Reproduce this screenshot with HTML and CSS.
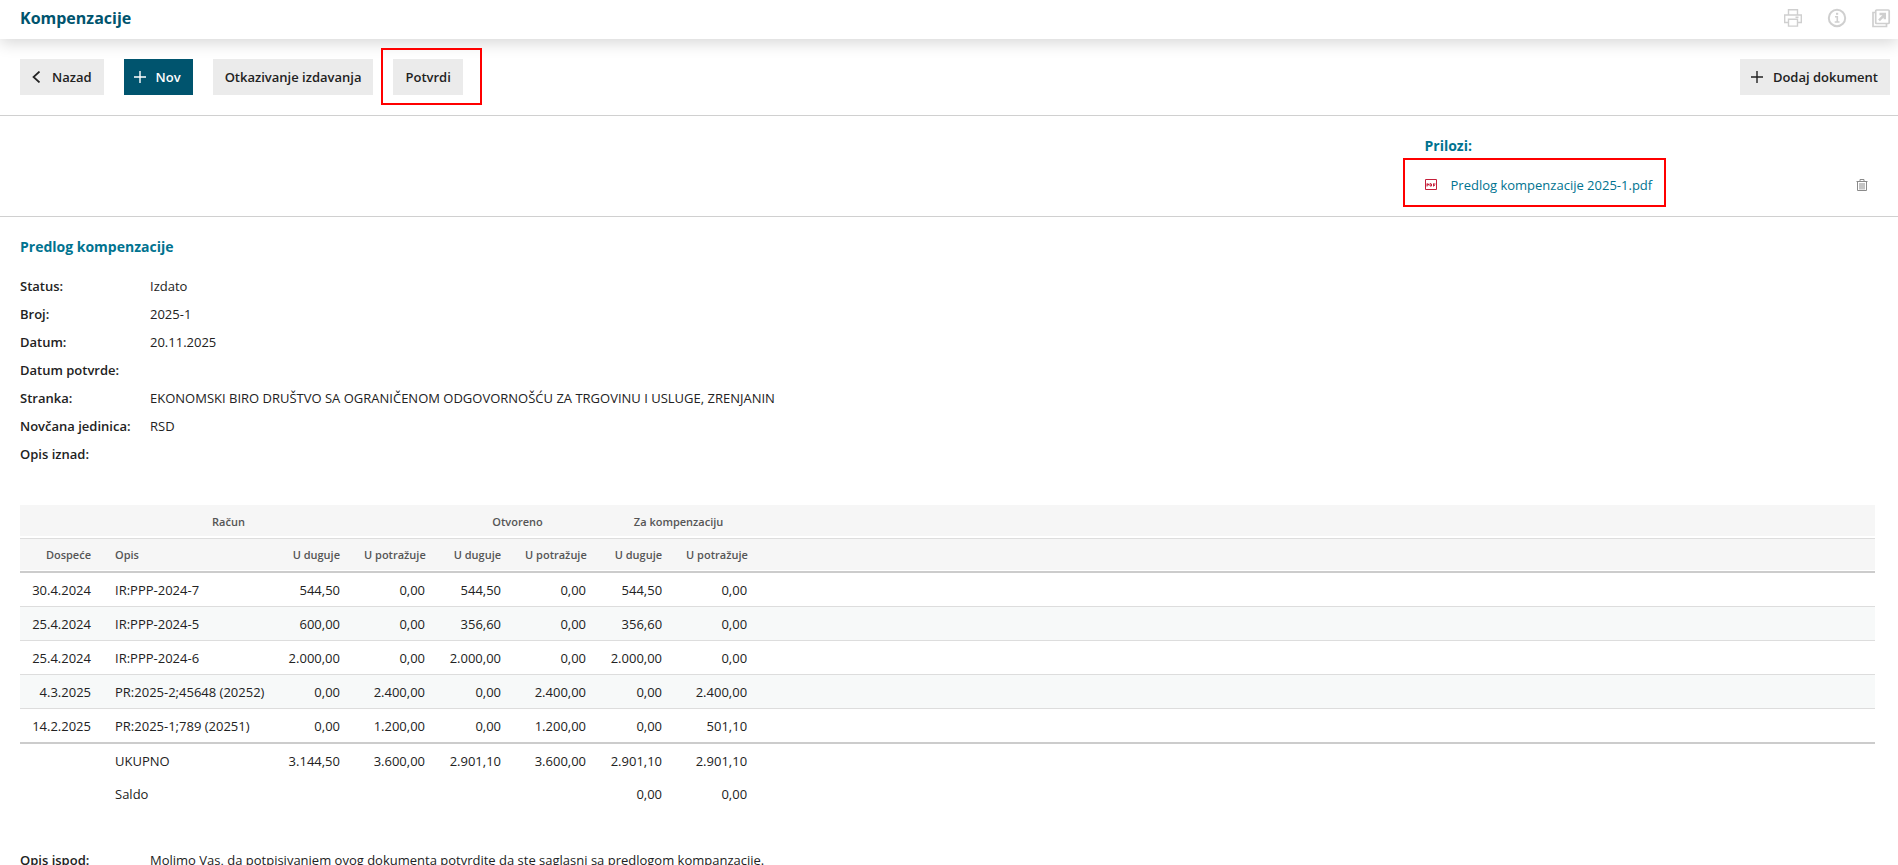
FILE: index.html
```html
<!DOCTYPE html>
<html lang="sr-Latn">
	<head>
		<meta charset="utf-8"/>
		<meta name="viewport" content="width=device-width"/>
		<title>Kompenzacije</title>
		<link rel="stylesheet" href="styles.css">
	</head>
	<body>
		<header class="header">
			<h1>Kompenzacije</h1>
			<div class="tools">
				<button type="button" class="tool" aria-label="Štampaj">
					<svg width="20" height="20" viewBox="0 0 20 20" fill="none" stroke="#cfcfcf" stroke-width="1.4"><path d="M5.5 7V1.7h9V7M5.5 14.5H1.7V7h16.6v7.5h-3.8M5.5 11.3h9v6.8h-9zM12.5 9.3h3"/></svg>
				</button>
				<button type="button" class="tool" aria-label="Informacije">
					<svg width="20" height="20" viewBox="0 0 20 20" fill="none" stroke="#cfcfcf"><circle cx="10" cy="10" r="8.2" stroke-width="2"/><path d="M8 8.7h2.3V14M7.7 14h4.8" stroke-width="1.6"/><path d="M9 5.8h2.2" stroke-width="2"/></svg>
				</button>
				<button type="button" class="tool" aria-label="Otvori u novom prozoru">
					<svg width="20" height="20" viewBox="0 0 20 20" fill="none" stroke="#cfcfcf" stroke-width="1.7"><rect x="4.7" y="2" width="13.5" height="13.5" rx="1"/><path d="M4.5 4.5H2v14h13.5v-3"/><path d="M8 12.3l5-5M8.5 6h5.3v5.3" stroke-width="2.4"/></svg>
				</button>
			</div>
		</header>

		<div class="toolbar">
			<button type="button" class="btn back">
				<svg width="12" height="12" viewBox="0 0 12 12" fill="none" stroke="#222" stroke-width="1.7"><path d="M7.5 0.5L1.5 6l6 5.5"/></svg>
				Nazad
			</button>
			<button type="button" class="btn primary">
				<svg width="12" height="12" viewBox="0 0 12 12" fill="none" stroke="#fff" stroke-width="1.4"><path d="M6 0v12M0 6h12"/></svg>
				Nov
			</button>
			<button type="button" class="btn">Otkazivanje izdavanja</button>
			<div class="marked">
				<button type="button" class="btn">Potvrdi</button>
			</div>
			<button type="button" class="btn add">
				<svg width="12" height="12" viewBox="0 0 12 12" fill="none" stroke="#222" stroke-width="1.4"><path d="M6 0v12M0 6h12"/></svg>
				Dodaj dokument
			</button>
		</div>

		<section class="files">
			<div class="files-list">
				<h2>Prilozi:</h2>
				<div class="file">
					<a href="#" class="marked">
						<svg width="12" height="12" viewBox="0 0 12 12"><path d="M0.5 0.5h11v10h-11z" fill="#fff" stroke="#c41f3a"/><path d="M2 7.5v-3M2 5h1.5v1H2M5 4.5v2.5h1.5v-2zM8.5 7.5v-3M8.5 5h2M8.5 6.3h1.5" fill="none" stroke="#c41f3a"/></svg>
						Predlog kompenzacije 2025-1.pdf
					</a>
					<button type="button" class="trash" aria-label="Obriši">
						<svg width="12" height="14" viewBox="0 0 12 14" fill="none" stroke="#8a8a8a"><path d="M0.5 3.5h11M4 3V1.5h4V3M1.5 4v8.5h9V4"/><path d="M4 5v6.5M6 5v6.5M8 5v6.5"/></svg>
					</button>
				</div>
			</div>
		</section>

		<main>
			<h2>Predlog kompenzacije</h2>
			<dl class="info">
				<dt>Status:</dt><dd>Izdato</dd>
				<dt>Broj:</dt><dd>2025-1</dd>
				<dt>Datum:</dt><dd>20.11.2025</dd>
				<dt>Datum potvrde:</dt><dd></dd>
				<dt>Stranka:</dt><dd>EKONOMSKI BIRO DRUŠTVO SA OGRANIČENOM ODGOVORNOŠĆU ZA TRGOVINU I USLUGE, ZRENJANIN</dd>
				<dt>Novčana jedinica:</dt><dd>RSD</dd>
				<dt>Opis iznad:</dt><dd></dd>
			</dl>

			<table>
				<colgroup>
					<col class="c-date"><col class="c-desc">
					<col class="c-debit"><col class="c-credit">
					<col class="c-debit"><col class="c-credit">
					<col class="c-debit"><col class="c-credit">
					<col>
				</colgroup>
				<thead>
					<tr class="groups">
						<th colspan="4">Račun</th>
						<th colspan="2">Otvoreno</th>
						<th colspan="2">Za kompenzaciju</th>
						<th></th>
					</tr>
					<tr class="names">
						<th>Dospeće</th><th class="desc">Opis</th>
						<th>U duguje</th><th>U potražuje</th>
						<th>U duguje</th><th>U potražuje</th>
						<th>U duguje</th><th>U potražuje</th>
						<th></th>
					</tr>
				</thead>
				<tbody>
					<tr><td>30.4.2024</td><td class="desc">IR:PPP-2024-7</td><td>544,50</td><td>0,00</td><td>544,50</td><td>0,00</td><td>544,50</td><td>0,00</td><td></td></tr>
					<tr><td>25.4.2024</td><td class="desc">IR:PPP-2024-5</td><td>600,00</td><td>0,00</td><td>356,60</td><td>0,00</td><td>356,60</td><td>0,00</td><td></td></tr>
					<tr><td>25.4.2024</td><td class="desc">IR:PPP-2024-6</td><td>2.000,00</td><td>0,00</td><td>2.000,00</td><td>0,00</td><td>2.000,00</td><td>0,00</td><td></td></tr>
					<tr><td>4.3.2025</td><td class="desc">PR:2025-2;45648 (20252)</td><td>0,00</td><td>2.400,00</td><td>0,00</td><td>2.400,00</td><td>0,00</td><td>2.400,00</td><td></td></tr>
					<tr><td>14.2.2025</td><td class="desc">PR:2025-1;789 (20251)</td><td>0,00</td><td>1.200,00</td><td>0,00</td><td>1.200,00</td><td>0,00</td><td>501,10</td><td></td></tr>
				</tbody>
				<tfoot>
					<tr><td></td><td class="desc">UKUPNO</td><td>3.144,50</td><td>3.600,00</td><td>2.901,10</td><td>3.600,00</td><td>2.901,10</td><td>2.901,10</td><td></td></tr>
					<tr><td></td><td class="desc">Saldo</td><td></td><td></td><td></td><td></td><td>0,00</td><td>0,00</td><td></td></tr>
				</tfoot>
			</table>

			<dl class="info">
				<dt>Opis ispod:</dt><dd>Molimo Vas, da potpisivanjem ovog dokumenta potvrdite da ste saglasni sa predlogom kompanzacije.</dd>
			</dl>
		</main>
	</body>
</html>
```
FILE: styles.css
```css
html{
	height:100%;
	overflow:hidden;
}
body{
	margin:0;
	height:100%;
	overflow:hidden;
	background-color:#fff;
	color:#222;
	font-family:"Open Sans","Noto Sans",sans-serif;
	font-size:13px;
	line-height:20px;
}
h1,h2,dl,dd{
	margin:0;
}
button{
	font:inherit;
	color:inherit;
	border:0;
	padding:0;
	background:none;
	cursor:pointer;
}
svg{
	display:block;
	flex:none;
}

.header{
	display:flex;
	justify-content:space-between;
	align-items:center;
	height:39px;
	padding:0 7px 4px 20px;
	box-sizing:border-box;
	box-shadow:0 4px 16px rgba(0,0,0,0.16);
}
.header h1{
	font-size:16px;
	font-weight:700;
	color:#00546e;
}
.tools{
	display:flex;
	gap:24px;
}

.toolbar{
	display:flex;
	gap:20px;
	padding:20px 8px 20px 20px;
	border-bottom:1px solid #d0d0d0;
}
.btn{
	display:flex;
	align-items:center;
	gap:10px;
	height:36px;
	padding:0 12px;
	background-color:#ebebeb;
	font-weight:600;
	white-space:nowrap;
}
.btn.back{
	gap:8px;
}
.btn.primary{
	background-color:#00546e;
	color:#fff;
	padding-left:10px;
}
.btn.add{
	margin-left:auto;
	padding-left:11px;
}

/* red frame laid over the highlighted control */
.marked{
	position:relative;
}
.marked:after{
	content:"";
	position:absolute;
	top:-11px;
	right:-19px;
	bottom:-10px;
	left:-12px;
	border:2px solid #f00;
	pointer-events:none;
}

.files{
	display:flex;
	justify-content:flex-end;
	padding:20px 0 16px;
	border-bottom:1px solid #d0d0d0;
}
.files-list{
	width:25%;
	box-sizing:border-box;
	padding:0 30px 0 1px;
}
h2{
	font-size:14px;
	font-weight:700;
	line-height:20px;
	color:#007390;
}
.file{
	display:flex;
	justify-content:space-between;
	align-items:center;
	margin-top:14px;
	height:30px;
}
.file a{
	display:flex;
	align-items:center;
	gap:14px;
	color:#007390;
	text-decoration:none;
}
.file .marked:after{
	top:-17px;
	right:-14px;
	bottom:-12px;
	left:-22px;
}

main{
	padding:20px 23px 0 20px;
}
.info{
	display:grid;
	grid-template-columns:130px 1fr;
	grid-auto-rows:28px;
	line-height:28px;
	margin-top:15px;
}
.info dt{
	font-weight:600;
}

table{
	width:100%;
	margin-top:37px;
	table-layout:fixed;
	border-collapse:separate;
	border-spacing:0;
}
.c-date{
	width:83px;
}
.c-desc{
	width:173px;
}
.c-debit{
	width:76px;
}
.c-credit{
	width:85px;
}
th,td{
	box-sizing:border-box;
	height:34px;
	padding:0 12px;
	text-align:right;
	white-space:nowrap;
	border-bottom:1px solid #ddd;
}
th{
	font-size:11px;
	font-weight:600;
	color:#555;
	background-color:#f6f6f6;
	background-clip:padding-box;
}
.groups th{
	text-align:center;
	box-shadow:inset 0 -2px #fff;
}
.names th{
	border-bottom:2px solid #ccc;
	box-shadow:inset 0 -1px #fff;
}
.desc{
	text-align:left;
}
tbody tr:nth-child(even){
	background-color:#f7f9f9;
}
tbody tr:last-child td{
	height:35px;
	border-bottom:2px solid #ccc;
}
tfoot td{
	height:33px;
	border-bottom:0;
}
table + .info{
	margin-top:36px;
}
```
